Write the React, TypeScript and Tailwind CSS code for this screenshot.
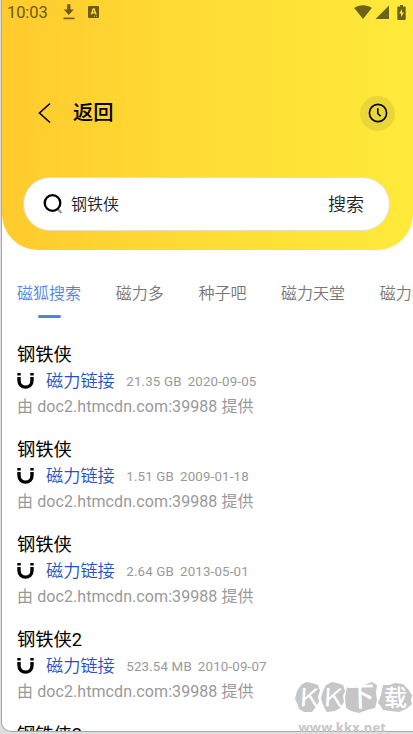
import { useState } from 'react';

const tabs = ['磁狐搜索', '磁力多', '种子吧', '磁力天堂', '磁力猫'];

const results = [
  { id: 1, title: '钢铁侠', size: '21.35 GB', date: '2020-09-05' },
  { id: 2, title: '钢铁侠', size: '1.51 GB', date: '2009-01-18' },
  { id: 3, title: '钢铁侠', size: '2.64 GB', date: '2013-05-01' },
  { id: 4, title: '钢铁侠2', size: '523.54 MB', date: '2010-09-07' },
  { id: 5, title: '钢铁侠2', size: '1.37 GB', date: '2010-09-07' },
];

const StatusBar = () => (
  <div className="flex h-6 items-center pl-[5px] pr-[7px] text-[#6b5a18]">
    <span className="w-[41px] pt-px text-[16.5px] leading-6 tracking-[-0.1px]">10:03</span>
    <svg className="ml-[15px] h-4 w-3" viewBox="0 0 12 16" fill="currentColor">
      <path d="M4.2 0.2h3.2v5.4h3.4L5.8 11 .8 5.6h3.4z" />
      <path d="M0.5 13.6h11v1.6H0.5z" />
    </svg>
    <svg className="ml-[13px] h-3 w-[11px]" viewBox="0 0 11 12">
      <rect width="11" height="12" rx="1" fill="currentColor" />
      <path d="M3.2 8.5 5.3 3h.8l2 5.5M4 6.8h3.3" fill="none" stroke="#ffd632" strokeWidth="1.4" />
      <path d="M6 10.2h1M8 10.2h1" stroke="#ffd632" strokeWidth="0.8" />
    </svg>
    <div className="ml-auto flex items-center text-[#6c6318]">
      <svg className="h-[14px] w-[18px]" viewBox="0 0 18 14" fill="currentColor">
        <path d="M0.2 3.1C5-.7 13-.7 17.8 3.1L9 14z" />
      </svg>
      <svg className="ml-[3px] h-[14px] w-[14px]" viewBox="0 0 14 14" fill="currentColor">
        <path d="M14 0.5V14H0.5z" />
      </svg>
      <svg className="ml-[8px] h-[15px] w-[9px]" viewBox="0 0 9 15">
        <path
          d="M3 0h3v1.5h2q.7 0 .7.7v12q0 .7-.7.7H1q-.7 0-.7-.7v-12q0-.7.7-.7h2z"
          fill="currentColor"
        />
        <path d="M5 4 2.2 8.6h1.9v3.7L6.9 7.5H5z" fill="#ffe838" />
      </svg>
    </div>
  </div>
);

const MagnetIcon = () => (
  <svg
    className="mb-px h-4 w-[17px]"
    viewBox="0 0 17 16"
    fill="none"
    stroke="#000"
    strokeWidth="3.4"
  >
    <path d="M2 0v2.6M15 0v2.6" />
    <path d="M2 4v3.4c0 9 13 9 13 0V4" />
  </svg>
);

// Brush-stroke blobs with the site name on top
const Watermark = () => (
  <svg
    className="pointer-events-none absolute left-[294px] top-[678px] h-[56px] w-[119px]"
    viewBox="294 678 119 56"
  >
    <g fill="#c6c6c6">
      <path d="m301 685 5-3 6 1 6 2 2 6-2 5 1 6-4 6-3 4-8 0-5-3-2-6-2-4 2-8z" />
      <path d="m326 685 6-3 5 1 6 2 2 6-2 5 1 6-4 6-5 3-8 1-3-5-2-5-1-4 2-7z" />
      <path d="m347 687 9-2 8 0 8-3 5 3-1 8 1 7-2 8-8 2-8 3-8-2-5-3-1-10z" />
      <path d="m383 685 6 0 6-2 8 1 5 5 4 6-1 6 1 3-6 5-7 3-9-1-7-1-3-5-2-2 3-8z" />
    </g>
    <g fill="#fff" fontFamily="'Noto Sans CJK SC', sans-serif" fontWeight="500">
      <text transform="translate(299 706) rotate(3) scale(1.2 1)" fontSize="25" fontWeight="350">
        K
      </text>
      <text transform="translate(323 706) rotate(3) scale(1.2 1)" fontSize="25" fontWeight="350">
        K
      </text>
      <text transform="translate(347 707) rotate(-2)" fontSize="28">
        下
      </text>
      <text x="384" y="706" fontSize="23">
        载
      </text>
    </g>
    <text
      x="298.5"
      y="732"
      textLength="87.5"
      fill="#c6c6c6"
      fontFamily="'Noto Sans', sans-serif"
      fontSize="13"
      fontWeight="700"
    >
      www.kkx.net
    </text>
  </svg>
);

const App = () => {
  const [activeTab, setActiveTab] = useState(0);
  const [keyword, setKeyword] = useState('钢铁侠');

  return (
    <div className="relative h-[734px] w-[413px] overflow-hidden bg-[#dedede] pl-px font-[Roboto,'Noto_Sans_CJK_SC',sans-serif]">
      <div className="h-[732px] overflow-hidden rounded-bl-[10px] border-b border-l border-[#a9a9a9] bg-white">
        {/* Header */}
        <header className="h-[250px] rounded-b-[36px] bg-gradient-to-r from-[#ffca2d] via-[#ffdd35] to-[#ffea3a]">
          <StatusBar />

          <div className="mt-[72px] flex h-[34px] items-center pl-[36px] pr-[18px]">
            <button type="button" className="flex items-center">
              <svg
                className="h-[22px] w-[13px]"
                viewBox="0 0 13 22"
                fill="none"
                stroke="#000"
                strokeWidth="1.6"
              >
                <path d="M12 1.5 1.5 11 12 20.5" />
              </svg>
              <span className="ml-[22px] text-[20.3px] font-medium leading-[34px] text-black">
                返回
              </span>
            </button>
            <button
              type="button"
              className="ml-auto flex size-[35px] items-center justify-center rounded-full bg-[#ead638]"
            >
              <svg
                className="size-5"
                viewBox="0 0 20 20"
                fill="none"
                stroke="#000"
                strokeWidth="1.6"
              >
                <circle cx="10" cy="10" r="8.6" />
                <path d="M9.8 5.2v5.3l2.8 2.8" />
              </svg>
            </button>
          </div>

          {/* Search box */}
          <div className="ml-[21px] mt-[47px] flex h-[54px] w-[367px] items-center rounded-full border border-[#e6dfc0] bg-white pl-[19px] pr-[25px]">
            <svg className="size-5" viewBox="0 0 20 20" fill="none">
              <path d="m14.5 15 4 4" stroke="#999" strokeWidth="2.4" />
              <circle cx="9.5" cy="9" r="7.8" stroke="#000" strokeWidth="2.3" />
            </svg>
            <input
              type="text"
              value={keyword}
              onChange={(e) => setKeyword(e.target.value)}
              className="ml-2 w-[200px] pt-[2px] text-[16px] font-[350] text-[#222] focus:outline-none"
            />
            <button type="button" className="ml-auto text-[18px] font-[350] text-[#222]">
              搜索
            </button>
          </div>
        </header>

        {/* Source tabs */}
        <nav className="flex h-[84px] gap-[34.7px] overflow-hidden pl-[15px] pt-8">
          {tabs.map((tab, index) => (
            <button
              key={tab}
              type="button"
              onClick={() => setActiveTab(index)}
              className={`flex shrink-0 flex-col items-center text-[16px] font-[350] leading-6 ${
                index === activeTab ? 'text-[#4a86df]' : 'text-[#777]'
              }`}
            >
              {tab}
              {index === activeTab && (
                <span className="mt-[9px] h-[3px] w-[23px] rounded-full bg-[#4a86df]" />
              )}
            </button>
          ))}
        </nav>

        {/* Results */}
        <ul className="pl-[15px] pt-[7px]">
          {results.map((item) => (
            <li key={item.id} className="h-[95.1px]">
              <h2 className="text-[18.3px] leading-7 text-black">{item.title}</h2>
              <div className="flex h-[25px] items-center">
                <MagnetIcon />
                <a href="#" className="ml-3 text-[17.2px] font-[350] leading-[25px] text-[#2450c4]">
                  磁力链接
                </a>
                <span className="ml-[11.5px] text-[13.3px] tracking-[0.17px] text-[#999]">
                  {item.size}
                </span>
                <span className="ml-[6px] text-[13.3px] tracking-[0.17px] text-[#999]">
                  {item.date}
                </span>
              </div>
              <p className="whitespace-nowrap text-[16px] leading-[26px] tracking-[0.08px] text-[#999]">
                由 doc2.htmcdn.com:39988 提供
              </p>
            </li>
          ))}
        </ul>
      </div>
      <Watermark />
    </div>
  );
};

export default App;
